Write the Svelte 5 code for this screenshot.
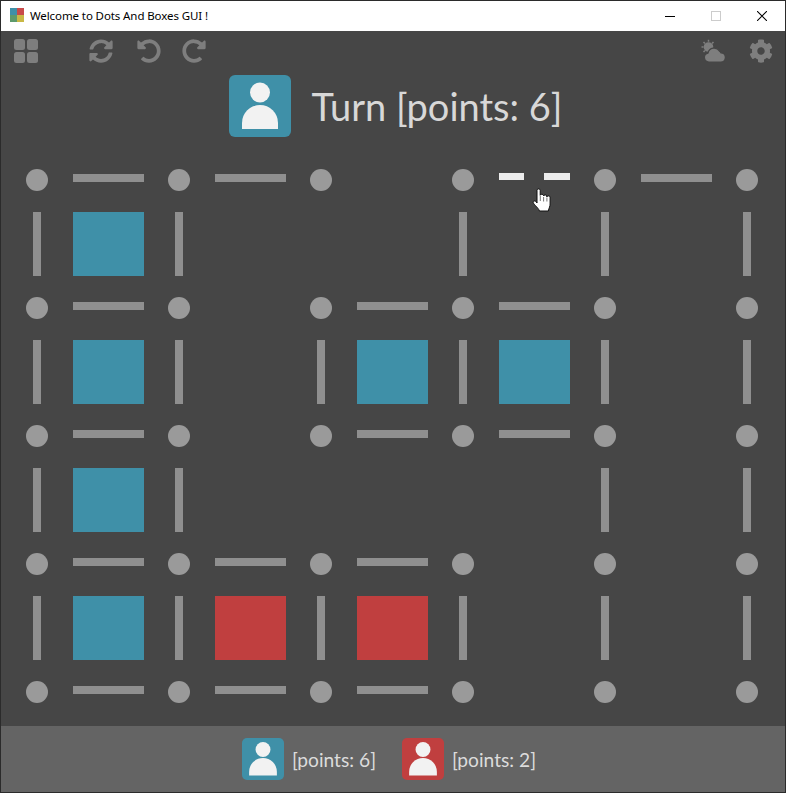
<script>
  const hRows = ['11021', '10110', '10110', '11100', '11100'];
  const vRows = ['110111', '111111', '110011', '111111'];
  const boxes = ['b....', 'b.bb.', 'b....', 'brr..'];
  const rows = [];
  hRows.forEach((h, r) => {
    const line = [];
    for (let c = 0; c < 6; c++) {
      line.push({ t: 'dot' });
      if (c < 5) line.push({ t: h[c] === '1' ? 'h' : h[c] === '2' ? 'hover' : 'none' });
    }
    rows.push(line);
    if (r < 4) {
      const cells = [];
      for (let c = 0; c < 6; c++) {
        cells.push({ t: vRows[r][c] === '1' ? 'v' : 'none' });
        if (c < 5) cells.push({ t: boxes[r][c] === 'b' ? 'blue' : boxes[r][c] === 'r' ? 'red' : 'none' });
      }
      rows.push(cells);
    }
  });
</script>

{#snippet personBig()}
  <svg viewBox="0 0 62 62" class="person" aria-hidden="true">
    <circle cx="31" cy="17.500" r="10" />
    <path d="M13 54v-6a18 18 0 0 1 36 0v6z" />
  </svg>
{/snippet}

{#snippet personSmall()}
  <svg viewBox="0 0 62 62" class="person" aria-hidden="true">
    <circle cx="31" cy="17" r="11" />
    <path d="M10.500 55.500v-5.400a20.500 20.500 0 0 1 41 0v5.400z" />
  </svg>
{/snippet}

<div class="window">
  <header class="titlebar">
    <span class="app-icon"><i class="q1"></i><i class="q2"></i><i class="q3"></i><i class="q4"></i></span>
    <span class="title">Welcome to Dots And Boxes GUI !</span>
    <div class="controls">
      <span class="ctl"><svg width="10" height="10" viewBox="0 0 10 10"><path d="M0 5.500h10" stroke="#000" /></svg></span>
      <span class="ctl"><svg width="10" height="10" viewBox="0 0 10 10"><rect x=".5" y=".5" width="9" height="9" fill="none" stroke="#ccc" /></svg></span>
      <span class="ctl"><svg width="10" height="10" viewBox="0 0 10 10"><path d="M0 0l10 10M10 0L0 10" stroke="#000" stroke-width="1.050" /></svg></span>
    </div>
  </header>

  <div class="toolbar">
    <svg class="ico" viewBox="0 0 24 24"><rect x="0" y="0" width="11" height="11" rx="2.500" /><rect x="13" y="0" width="11" height="11" rx="2.500" /><rect x="0" y="13" width="11" height="11" rx="2.500" /><rect x="13" y="13" width="11" height="11" rx="2.500" /></svg>
    <div class="group">
      <svg class="ico" viewBox="0 0 512 512"><path d="M370.72 133.28C339.458 104.008 298.888 87.962 255.848 88c-77.458.068-144.328 53.178-162.791 126.85-1.344 5.363-6.122 9.15-11.651 9.15H24.103c-7.498 0-13.194-6.807-11.807-14.176C33.933 94.924 134.813 8 256 8c66.448 0 126.791 26.136 171.315 68.685L463.03 40.97C478.149 25.851 504 36.559 504 57.941V192c0 13.255-10.745 24-24 24H345.941c-21.382 0-32.09-25.851-16.971-40.971l41.75-41.749zM32 296h134.059c21.382 0 32.09 25.851 16.971 40.971l-41.75 41.75c31.262 29.273 71.835 45.319 114.876 45.28 77.418-.07 144.315-53.144 162.787-126.849 1.344-5.363 6.122-9.15 11.651-9.15h57.304c7.498 0 13.194 6.807 11.807 14.176C478.067 417.076 377.187 504 256 504c-66.448 0-126.791-26.136-171.315-68.685L48.97 471.03C33.851 486.149 8 475.441 8 454.059V320c0-13.255 10.745-24 24-24z" /></svg>
      <svg class="ico" viewBox="0 0 512 512"><path d="M255.545 8c-66.269.119-126.438 26.233-170.86 68.685L48.971 40.971C33.851 25.851 8 36.559 8 57.941V192c0 13.255 10.745 24 24 24h134.059c21.382 0 32.09-25.851 16.971-40.971l-41.75-41.75c30.864-28.899 70.801-44.907 113.23-45.273 92.398-.798 170.283 73.977 169.484 169.442C423.236 348.009 349.816 424 256 424c-41.127 0-79.997-14.678-110.63-41.556-4.743-4.161-11.906-3.908-16.368.553L89.34 422.659c-4.872 4.872-4.631 12.815.482 17.433C133.798 479.813 192.074 504 256 504c136.966 0 247.999-111.033 248-247.998C504.001 119.193 392.354 7.755 255.545 8z" /></svg>
      <svg class="ico redo" viewBox="0 0 512 512"><path d="M256.455 8c66.269.119 126.437 26.233 170.859 68.685l35.715-35.715C478.149 25.851 504 36.559 504 57.941V192c0 13.255-10.745 24-24 24H345.941c-21.382 0-32.09-25.851-16.971-40.971l41.75-41.75c-30.864-28.899-70.801-44.907-113.23-45.273-92.398-.798-170.283 73.977-169.484 169.442C88.764 348.009 162.184 424 256 424c41.127 0 79.997-14.678 110.629-41.556 4.743-4.161 11.906-3.908 16.368.553l39.662 39.662c4.872 4.872 4.631 12.815-.482 17.433C378.202 479.813 319.926 504 256 504 119.034 504 8.001 392.967 8 256.002 7.999 119.193 119.646 7.755 256.455 8z" /></svg>
    </div>
    <div class="group end">
      <svg class="ico" viewBox="0 0 24 24">
        <circle cx="7.500" cy="8" r="4.800" />
        <path d="M7.500 0.800v2M2.500 3l1.400 1.400M12.500 3l-1.400 1.400M0.500 8h2M2.500 13l1.400-1.400" stroke="#7e7e7e" stroke-width="1.500" fill="none" />
        <path d="M7.800 23a4.500 4.500 0 0 1-.8-8.900 6.200 6.200 0 0 1 11.500-1.800 4.300 4.300 0 0 1 1.400 1.500A4.600 4.600 0 0 1 19.600 23z" stroke="#464646" stroke-width="1.200" />
      </svg>
      <svg class="ico" viewBox="0 0 512 512"><path d="M487.4 315.7l-42.6-24.6c4.3-23.2 4.3-47 0-70.2l42.6-24.6c4.9-2.8 7.1-8.6 5.5-14-11.1-35.6-30-67.8-54.7-94.6-3.8-4.1-10-5.1-14.8-2.3L380.8 110c-17.9-15.4-38.5-27.3-60.8-35.1V25.8c0-5.6-3.9-10.5-9.4-11.7-36.7-8.2-74.3-7.8-109.2 0-5.5 1.2-9.4 6.1-9.4 11.7V75c-22.2 7.9-42.8 19.8-60.8 35.1L88.7 85.5c-4.9-2.8-11-1.9-14.8 2.3-24.7 26.7-43.6 58.9-54.7 94.6-1.7 5.4.6 11.2 5.5 14L67.3 221c-4.3 23.2-4.3 47 0 70.2l-42.6 24.6c-4.9 2.8-7.1 8.6-5.5 14 11.1 35.6 30 67.8 54.7 94.6 3.8 4.1 10 5.1 14.8 2.3l42.6-24.6c17.9 15.4 38.5 27.3 60.8 35.1v49.2c0 5.6 3.9 10.5 9.4 11.7 36.7 8.2 74.3 7.8 109.2 0 5.5-1.2 9.4-6.1 9.4-11.7v-49.2c22.2-7.9 42.8-19.8 60.8-35.1l42.6 24.6c4.9 2.8 11 1.9 14.8-2.3 24.7-26.7 43.6-58.9 54.7-94.6 1.5-5.5-.7-11.3-5.6-14.1zM256 336c-44.1 0-80-35.9-80-80s35.9-80 80-80 80 35.9 80 80-35.9 80-80 80z" /></svg>
    </div>
  </div>

  <div class="turn">
    <span class="avatar big blue">{@render personBig()}</span>
    <span class="turn-text">Turn [points: 6]</span>
  </div>

  <div class="board">
    {#each rows as line}
      {#each line as cell}
        <div class="cell">
          {#if cell.t === 'dot'}<span class="dot"></span>
          {:else if cell.t === 'h'}<span class="h"></span>
          {:else if cell.t === 'hover'}<span class="hover"><i></i><i></i></span>
          {:else if cell.t === 'v'}<span class="v"></span>
          {:else if cell.t === 'blue'}<span class="box blue"></span>
          {:else if cell.t === 'red'}<span class="box red"></span>
          {/if}
        </div>
      {/each}
    {/each}
  </div>

  <footer class="footer">
    <div class="player"><span class="avatar small blue">{@render personSmall()}</span><span class="pts">[points: 6]</span></div>
    <div class="player"><span class="avatar small red">{@render personSmall()}</span><span class="pts">[points: 2]</span></div>
  </footer>

  <svg class="cursor" width="20" height="26" viewBox="0 0 20 26" aria-hidden="true">
    <path d="M5 3.200C5 1.500 8.200 1.500 8.200 3.200V8.300c0-1.400 3.300-1.400 3.300 0V9c0-1.400 3.300-1.400 3.300 0v1c0-1.400 3.300-1.400 3.300 0v7c0 2.500-1 3.500-1.800 7H7.500c-.8-2.300-2.500-3.500-4-5.300C2.300 17.200.8 16 1.200 14.800c.4-1.200 2-1 3 0L5 16z" fill="#fff" stroke="#111" stroke-width="1" />
    <path d="M8.300 9v5M11.600 10v4.500M14.900 10.500v4" stroke="#555" stroke-width=".8" fill="none" />
  </svg>
</div>

<style>
  :global(body) {
    margin: 0;
    background: #464646;
  }
  .window {
    position: relative;
    box-sizing: border-box;
    width: 786px;
    height: 793px;
    border: 1px solid #2b2b2b;
    background: #464646;
    display: flex;
    flex-direction: column;
    overflow: hidden;
  }
  .titlebar {
    height: 30px;
    flex: none;
    background: #fff;
    display: flex;
    align-items: center;
    padding-left: 9px;
    font: 11.5px "Noto Sans", sans-serif;
    color: #000;
  }
  .app-icon {
    width: 14px;
    height: 14px;
    display: grid;
    grid-template-columns: 1fr 1fr;
    margin-top: -3px;
  }
  .app-icon i { display: block; }
  .q1 { background: #3f90a8; }
  .q2 { background: #c84a4a; }
  .q3 { background: #5d9a6c; }
  .q4 { background: #c9b845; }
  .title { margin-left: 6px; margin-top: -2px; letter-spacing: -0.1px; }
  .controls { margin-left: auto; display: flex; }
  .ctl {
    width: 46px;
    height: 30px;
    display: flex;
    align-items: center;
    justify-content: center;
  }
  .toolbar {
    flex: none;
    height: 24px;
    margin-top: 8px;
    padding: 0 12px 0 13px;
    display: flex;
    gap: 51px;
  }
  .group { display: flex; gap: 24px; }
  .group.end { margin-left: auto; }
  .ico { width: 24px; height: 24px; fill: #7e7e7e; display: block; }
  .ico.redo { margin-left: -3px; }
  .turn {
    flex: none;
    height: 63px;
    margin-top: 11px;
    padding-left: 5px;
    display: flex;
    align-items: center;
    justify-content: center;
    gap: 21px;
  }
  .turn-text {
    font: 38px Lato, sans-serif;
    color: #d8d8d8;
  }
  .avatar {
    display: block;
    flex: none;
  }
  .avatar.big { width: 62px; height: 62px; border-radius: 6px; }
  .avatar.small { width: 42px; height: 42px; border-radius: 5px; }
  .person { display: block; width: 100%; height: 100%; fill: #f2f2f2; }
  .blue { background: #3f90a8; }
  .red { background: #c03f3f; }
  .board {
    flex: none;
    margin: 11px 0 0 1px;
    display: grid;
    grid-template-columns: repeat(11, 71px);
    grid-auto-rows: 64px;
  }
  .cell {
    display: flex;
    align-items: center;
    justify-content: center;
  }
  .dot {
    width: 22.6px;
    height: 22.6px;
    border-radius: 50%;
    background: #9a9a9a;
    margin-left: -1px;
  }
  .h {
    width: 71px;
    height: 8px;
    background: #8f8f8f;
    margin-top: -4px;
  }
  .v {
    width: 8px;
    height: 64px;
    background: #8f8f8f;
    margin-left: -1px;
  }
  .box { width: 71px; height: 64px; }
  .hover {
    width: 71px;
    height: 7px;
    margin-top: -7px;
    display: flex;
    justify-content: space-between;
  }
  .hover i { display: block; width: 25px; height: 7px; background: #ececec; }
  .hover i:last-child { width: 26px; }
  .footer {
    flex: 1;
    margin-top: 2px;
    padding-right: 8px;
    background: #646464;
    display: flex;
    align-items: center;
    justify-content: center;
    gap: 26px;
  }
  .player { display: flex; align-items: center; gap: 8px; }
  .pts {
    font: 19.2px Lato, sans-serif;
    color: #dcdcdc;
  }
  .cursor {
    position: absolute;
    left: 531px;
    top: 186px;
  }
</style>
